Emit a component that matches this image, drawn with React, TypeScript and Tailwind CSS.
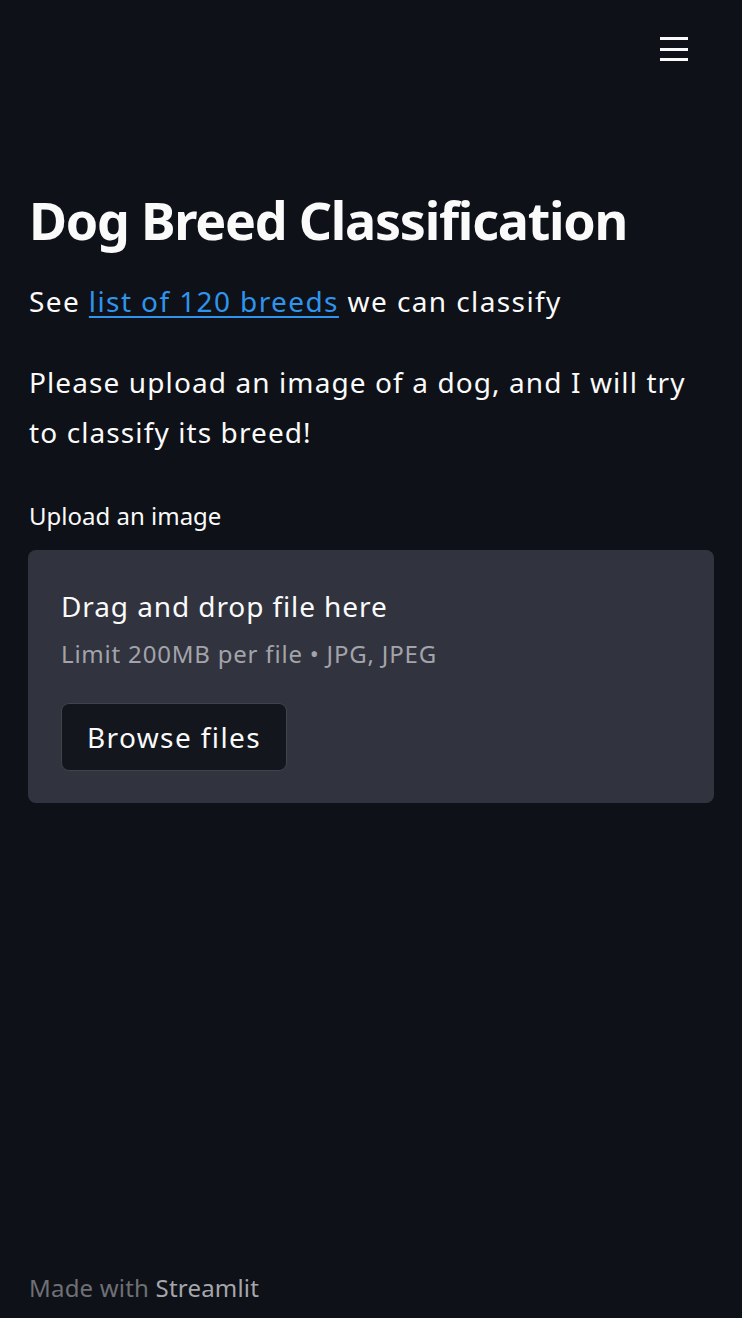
import React from "react";

export default function App() {
  return (
    <div
      className="min-h-[1318px] w-full bg-[#0e1117] text-[#fafafa] flex flex-col"
      style={{ fontFamily: '"Noto Sans", "Open Sans", sans-serif' }}
    >
      <div className="flex justify-end pt-[36px] pr-[54px]">
        <svg width="28" height="26" viewBox="0 0 28 26" aria-label="menu">
          <rect x="0" y="1" width="28" height="3" fill="#fafafa" />
          <rect x="0" y="12" width="28" height="3" fill="#fafafa" />
          <rect x="0" y="22" width="28" height="3" fill="#fafafa" />
        </svg>
      </div>

      <main className="px-[28px] mt-[126px]">
        <h1 className="text-[52px] leading-[64px] font-bold tracking-[-1.25px] pl-[1px] whitespace-nowrap">
          Dog Breed Classification
        </h1>
        <p className="mt-[24px] text-[28px] leading-[50px] tracking-[1.4px] pl-[1px]">
          See{" "}
          <a
            href="#"
            className="text-[#2f94ec] underline underline-offset-[4px] decoration-[1.5px]"
          >
            list of 120 breeds
          </a>{" "}
          we can classify
        </p>
        <p className="mt-[31px] text-[28px] leading-[50px] tracking-[1.1px] pl-[1px]">
          Please upload an image of a dog, and I will try to classify its breed!
        </p>

        <div className="mt-[43px] text-[24px] leading-[32px] pl-[1px]">Upload an image</div>

        <section className="mt-[18px] h-[253px] rounded-[8px] bg-[#31333f] px-[33px] pt-[36px]">
          <div className="text-[28px] leading-[40px] tracking-[0.9px]">Drag and drop file here</div>
          <div className="mt-[12px] text-[24px] leading-[32px] tracking-[0.8px] text-[#a3a4aa]">
            Limit 200MB per file • JPG, JPEG
          </div>
          <button className="mt-[33px] h-[68px] w-[226px] rounded-[8px] border border-[#40424c] bg-[#13161d] text-[28px] leading-[40px] tracking-[1.4px] text-[#fafafa]">
            Browse files
          </button>
        </section>
      </main>

      <footer className="mt-auto pb-[14px] text-[24px] leading-[32px] tracking-[0.2px] pl-[29px]">
        <span className="text-[#6e7075]">Made with </span>
        <span className="text-[#a5a6ab]">Streamlit</span>
      </footer>
    </div>
  );
}
